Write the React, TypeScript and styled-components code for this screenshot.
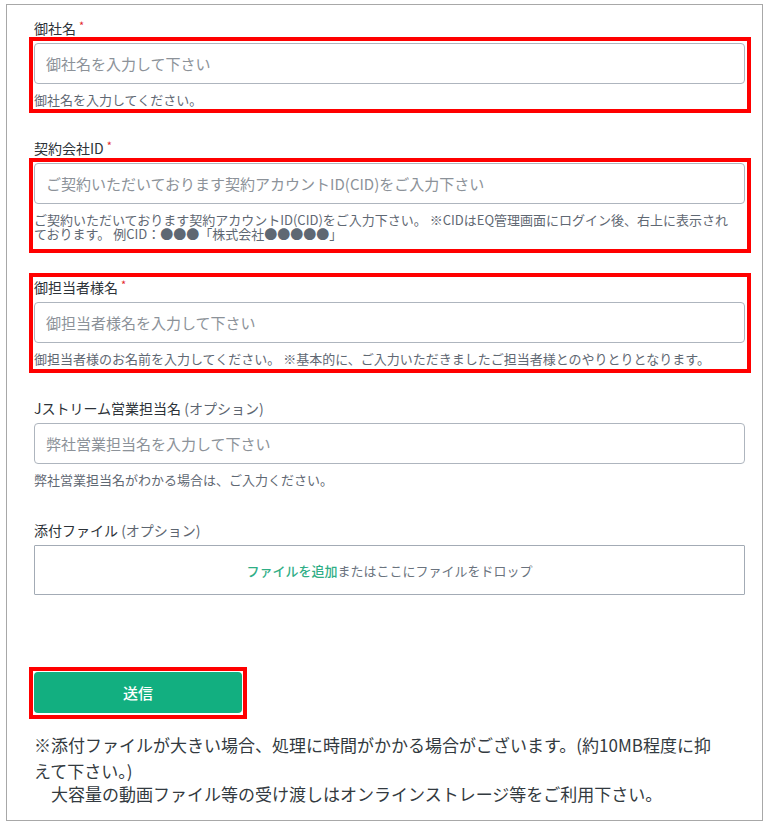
import React from "react";
import styled, { createGlobalStyle } from "styled-components";

const GlobalStyle = createGlobalStyle`
  html, body { margin: 0; padding: 0; background: #ffffff; }
  body {
    font-family: "Noto Sans CJK JP", "Noto Sans", "Liberation Sans", sans-serif;
    color: #3b4148;
  }
  * { box-sizing: border-box; }
`;

const Page = styled.div`
  padding: 4px 4px 3px 6px;
`;

const Frame = styled.form`
  border: 1px solid #a8a8a8;
  min-height: 817px;
  padding: 13px 17px 0 27px;
  display: flex;
  flex-direction: column;
`;

type Inset = { $t: number; $l: number; $r: number; $b: number };

const Marked = styled.div<Inset>`
  position: relative;
  &::after {
    content: "";
    position: absolute;
    top: ${(p) => p.$t}px;
    left: ${(p) => p.$l}px;
    right: ${(p) => p.$r}px;
    bottom: ${(p) => p.$b}px;
    border: 4px solid #ff0000;
    pointer-events: none;
  }
`;

const Field = styled.div<{ $after?: number }>`
  display: flex;
  flex-direction: column;
  margin-bottom: ${(p) => p.$after ?? 31}px;
`;

const Label = styled.label`
  font-size: 14px;
  line-height: 20px;
  font-weight: 400;
  color: #2c3238;
  margin-bottom: 5px;
  display: block;
`;

const Req = styled.span`
  color: #e3262c;
  font-size: 11px;
  vertical-align: top;
  line-height: 14px;
  margin-left: 3px;
`;

const Optional = styled.span`
  font-weight: 400;
  color: #5d6570;
`;

const Input = styled.input`
  display: block;
  width: 100%;
  height: 41px;
  border: 1px solid #aeb5be;
  border-radius: 4px;
  padding: 0 11px;
  font-family: inherit;
  font-size: 15px;
  color: #333;
  background: #fff;
  outline: none;
  &::placeholder { color: #8c9299; }
`;

const Help = styled.p`
  margin: 9px 0 0;
  padding-right: 10px;
  font-size: 13px;
  line-height: 14px;
  color: #5f6873;
`;

const Drop = styled.div`
  height: 50px;
  border: 1px solid #a3abb5;
  border-radius: 1px;
  display: flex;
  align-items: center;
  justify-content: center;
  font-size: 13px;
  color: #6a737e;
`;

const DropLink = styled.span`
  color: #2fae86;
  font-weight: 500;
`;

const ButtonRow = styled.div`
  margin-top: 77px;
  display: flex;
`;

const Submit = styled.button`
  width: 208px;
  height: 41px;
  border: none;
  border-radius: 4px;
  background: #12af80;
  color: #ffffff;
  font-family: inherit;
  font-size: 15px;
  font-weight: 500;
  cursor: pointer;
`;

const Notice = styled.div`
  margin-top: 19px;
  padding-right: 24px;
  font-size: 17px;
  color: #333a40;
`;

const NoticeLine = styled.p<{ $lh: number }>`
  margin: 0;
  line-height: ${(p) => p.$lh}px;
`;

export default function App() {
  return (
    <>
      <GlobalStyle />
      <Page>
        <Frame onSubmit={(e) => e.preventDefault()}>
          <Field>
            <Label>
              御社名<Req>*</Req>
            </Label>
            <Marked $t={-6} $l={-5} $r={-6} $b={-6}>
              <Input placeholder="御社名を入力して下さい" />
              <Help>御社名を入力してください。</Help>
            </Marked>
          </Field>

          <Field $after={36}>
            <Label>
              契約会社ID<Req>*</Req>
            </Label>
            <Marked $t={-5} $l={-5} $r={-6} $b={-12}>
              <Input placeholder="ご契約いただいております契約アカウントID(CID)をご入力下さい" />
              <Help>
                ご契約いただいております契約アカウントID(CID)をご入力下さい。 ※CIDはEQ管理画面にログイン後、右上に表示されております。 例CID：●●●「株式会社●●●●●」
              </Help>
            </Marked>
          </Field>

          <Field $after={32}>
            <Marked $t={-4} $l={-5} $r={-6} $b={-7}>
              <Label>
                御担当者様名<Req>*</Req>
              </Label>
              <Input placeholder="御担当者様名を入力して下さい" />
              <Help>
                御担当者様のお名前を入力してください。 ※基本的に、ご入力いただきましたご担当者様とのやりとりとなります。
              </Help>
            </Marked>
          </Field>

          <Field $after={33}>
            <Label>
              Jストリーム営業担当名 <Optional>(オプション)</Optional>
            </Label>
            <Input placeholder="弊社営業担当名を入力して下さい" />
            <Help>弊社営業担当名がわかる場合は、ご入力ください。</Help>
          </Field>

          <Field $after={0}>
            <Label>
              添付ファイル <Optional>(オプション)</Optional>
            </Label>
            <Drop>
              <DropLink>ファイルを追加</DropLink>またはここにファイルをドロップ
            </Drop>
          </Field>

          <ButtonRow>
            <Marked $t={-5} $l={-5} $r={-5} $b={-6}>
              <Submit type="submit">送信</Submit>
            </Marked>
          </ButtonRow>

          <Notice>
            <NoticeLine $lh={26}>
              ※添付ファイルが大きい場合、処理に時間がかかる場合がございます。(約10MB程度に抑えて下さい。)
            </NoticeLine>
            <NoticeLine $lh={20}>
              {"\u3000"}大容量の動画ファイル等の受け渡しはオンラインストレージ等をご利用下さい。
            </NoticeLine>
          </Notice>
        </Frame>
      </Page>
    </>
  );
}
